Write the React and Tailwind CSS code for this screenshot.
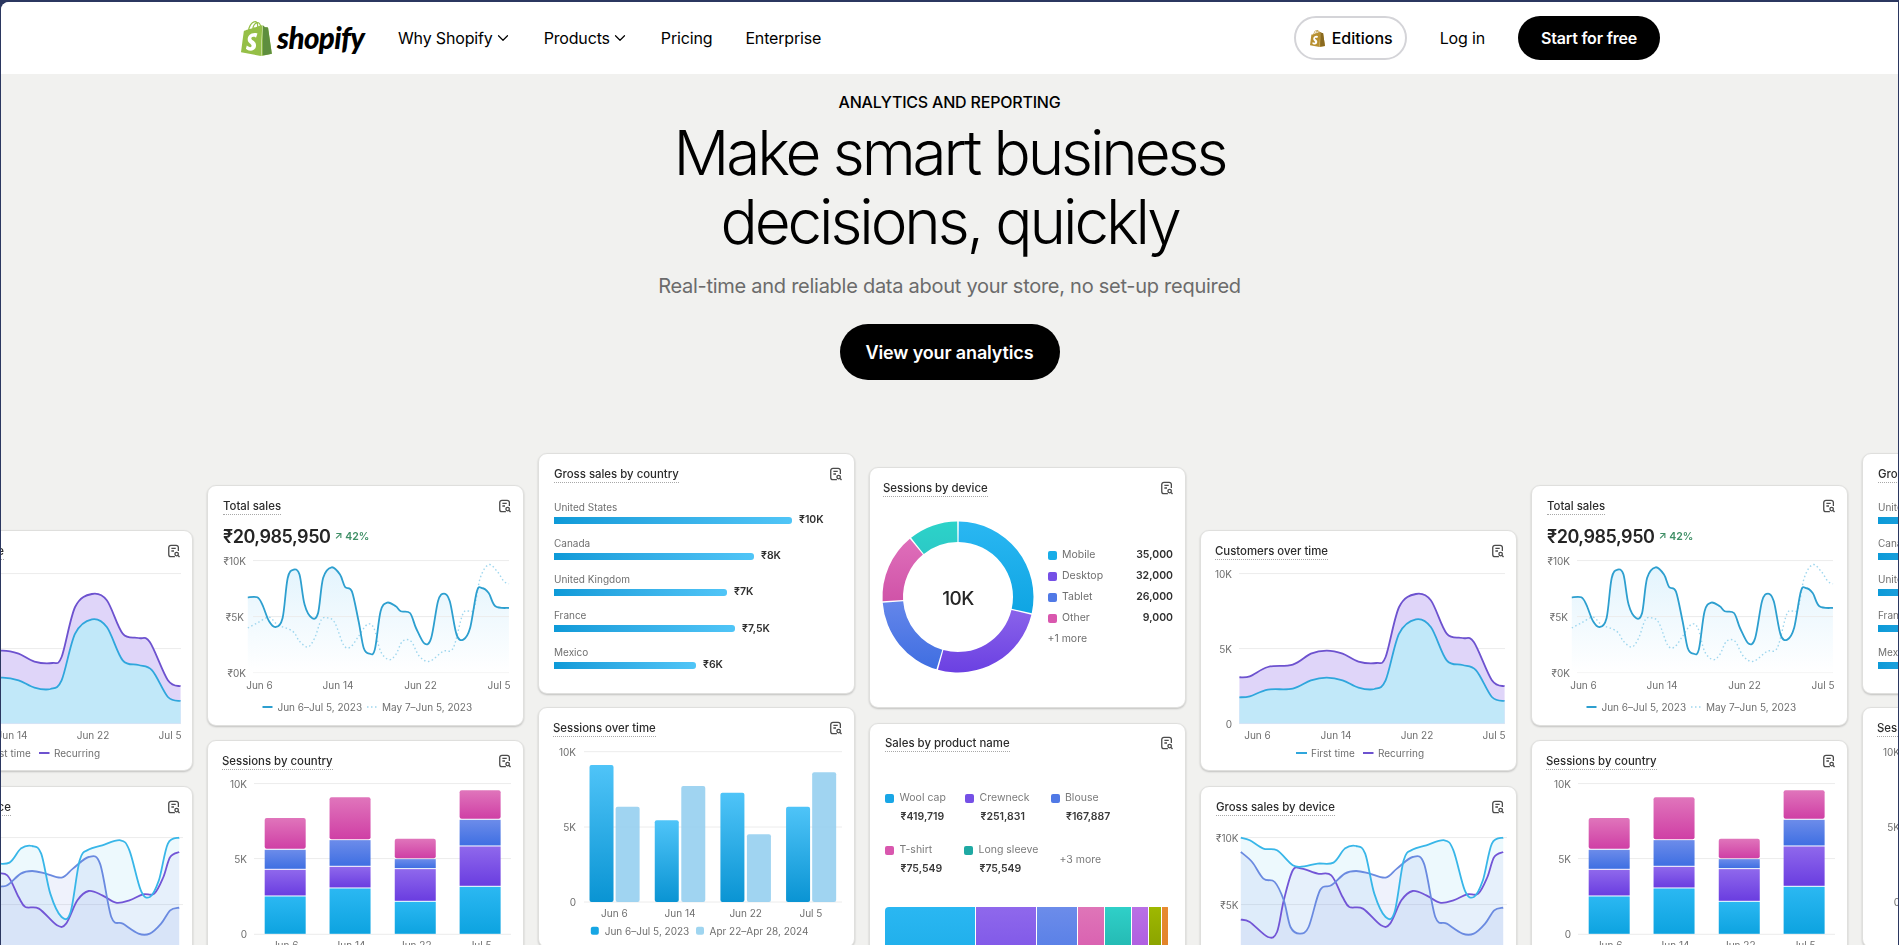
import { ChevronDown } from 'lucide-react';
import { SiShopify } from 'react-icons/si';

// Catmull-Rom through the points, gives a smooth curve like the chart lib does
function smooth(pts) {
  let d = `M${pts[0][0].toFixed(1)} ${pts[0][1].toFixed(1)}`;
  for (let i = 0; i < pts.length - 1; i++) {
    const p0 = pts[i - 1] || pts[i];
    const p1 = pts[i];
    const p2 = pts[i + 1];
    const p3 = pts[i + 2] || p2;
    const c1x = p1[0] + (p2[0] - p0[0]) / 6;
    const c1y = p1[1] + (p2[1] - p0[1]) / 6;
    const c2x = p2[0] - (p3[0] - p1[0]) / 6;
    const c2y = p2[1] - (p3[1] - p1[1]) / 6;
    d += ` C${c1x.toFixed(1)} ${c1y.toFixed(1)} ${c2x.toFixed(1)} ${c2y.toFixed(1)} ${p2[0].toFixed(1)} ${p2[1].toFixed(1)}`;
  }
  return d;
}

function area(pts, bottom) {
  const last = pts[pts.length - 1];
  return `${smooth(pts)} L${last[0].toFixed(1)} ${bottom} L${pts[0][0].toFixed(1)} ${bottom} Z`;
}

function arc(cx, cy, ro, ri, a0, a1) {
  const p = (r, a) => {
    const t = ((a - 90) * Math.PI) / 180;
    return `${(cx + r * Math.cos(t)).toFixed(2)} ${(cy + r * Math.sin(t)).toFixed(2)}`;
  };
  const large = a1 - a0 > 180 ? 1 : 0;
  return `M${p(ro, a0)} A${ro} ${ro} 0 ${large} 1 ${p(ro, a1)} L${p(ri, a1)} A${ri} ${ri} 0 ${large} 0 ${p(ri, a0)} Z`;
}

function Label({ x, y, a = 'end', children }) {
  return (
    <text x={x} y={y} textAnchor={a} dominantBaseline="central" fontSize="10" fill="#6f6f6f">
      {children}
    </text>
  );
}

function Grid({ x1, x2, ys }) {
  return ys.map(y => <line key={y} x1={x1} x2={x2} y1={y} y2={y} stroke="#ececec" strokeWidth="1" />);
}

function ReportIcon() {
  return (
    <svg viewBox="0 0 16 16" className="h-[14px] w-[14px] shrink-0" fill="none" stroke="#4b4b4b" strokeWidth="1.5">
      <path d="M9 14.5H4.5A2.5 2.5 0 0 1 2 12V4a2.5 2.5 0 0 1 2.5-2.5h6A2.5 2.5 0 0 1 13 4v4" />
      <path d="M5 5h5M5 8h3" />
      <circle cx="11" cy="11.5" r="2" />
      <path d="M12.6 13.1l1.7 1.7" />
    </svg>
  );
}

function Card({ title, pad = 'pl-[14px]', children }) {
  return (
    <div className="h-[241px] w-[317px] shrink-0 overflow-hidden rounded-[9px] border border-[#dfdfdd] bg-white shadow-[0_1px_2px_rgba(0,0,0,0.2)]">
      <div className={`flex h-[35.5px] items-start justify-between pr-[11px] pt-[12.5px] ${pad}`}>
        <span className="border-b border-dotted border-[#a8a8a8] pb-[1px] text-[11.4px] font-medium leading-[14px] text-[#2c2c2c]">
          {title}
        </span>
        <ReportIcon />
      </div>
      {children}
    </div>
  );
}

const z7 = pts => pts.map(([x, y]) => [x / 2.21 - 10, y / 3 - 30.7]);

const firstTime = z7([[107,591],[130,588],[170,568],[225,565],[265,540],[300,532],[335,540],[370,562],[405,566],[430,540],[460,400],[497,357],[530,380],[565,480],[600,494],[630,510],[665,590],[693,602]]);
const recurring = z7([[107,531],[130,528],[170,500],[225,493],[265,460],[300,451],[335,460],[370,484],[410,488],[430,470],[460,320],[497,281],[530,300],[565,400],[600,413],[625,425],[665,540],[693,558]]);

function CustomersCard() {
  return (
    <Card title="Customers over time">
      <svg viewBox="0 36 316 204" className="block h-[204px] w-[316px]">
        <Grid x1={38} x2={304} ys={[42.6, 117.6, 192.6]} />
        <path d={area(recurring, 192.6)} fill="#dfd5f9" />
        <path d={area(firstTime, 192.6)} fill="#c1e8f9" />
        <path d={smooth(recurring)} fill="none" stroke="#6d52cf" strokeWidth="1.8" />
        <path d={smooth(firstTime)} fill="none" stroke="#2fa6dc" strokeWidth="1.8" />
        <Label x={31} y={42.6}>10K</Label>
        <Label x={31} y={117.6}>5K</Label>
        <Label x={31} y={192.6}>0</Label>
        <Label x={56.5} y={204} a="middle">Jun 6</Label>
        <Label x={135} y={204} a="middle">Jun 14</Label>
        <Label x={216} y={204} a="middle">Jun 22</Label>
        <Label x={293} y={204} a="middle">Jul 5</Label>
        <line x1={95} x2={106} y1={222} y2={222} stroke="#2fa6dc" strokeWidth="1.8" />
        <Label x={110} y={222} a="start">First time</Label>
        <line x1={162} x2={172.5} y1={222} y2={222} stroke="#6d52cf" strokeWidth="1.8" />
        <Label x={177} y={222} a="start">Recurring</Label>
      </svg>
    </Card>
  );
}

const z3 = pts => pts.map(([x, y]) => [x / 2.96 - 207.5, y / 3 - 45.7]);

const salesNow = z3([[732,468],[760,468],[775,490],[795,540],[815,557],[835,530],[850,410],[868,385],[885,400],[900,490],[922,530],[940,515],[955,410],[980,378],[1005,400],[1020,437],[1040,450],[1060,540],[1075,620],[1092,637],[1108,625],[1125,510],[1145,484],[1170,495],[1185,510],[1212,515],[1230,560],[1255,607],[1275,590],[1295,480],[1313,457],[1330,480],[1350,580],[1370,595],[1390,560],[1410,450],[1425,440],[1445,455],[1465,495],[1505,500]]);
const salesPrev = z3([[732,560],[760,545],[795,528],[820,550],[865,570],[885,600],[910,617],[930,590],[950,535],[970,530],[990,545],[1015,610],[1035,618],[1060,585],[1085,550],[1105,560],[1125,630],[1150,655],[1170,640],[1190,600],[1215,600],[1240,645],[1270,660],[1310,630],[1340,620],[1370,515],[1400,505],[1420,410],[1445,370],[1470,390],[1490,420],[1505,428]]);

function TotalSalesCard() {
  return (
    <Card title="Total sales" pad="pl-[15px]">
      <div className="flex h-[31px] items-center gap-[4px] pl-[15px]">
        <span className="text-[18px] font-semibold leading-none tracking-[-0.45px] text-[#252525]">₹20,985,950</span>
        <span className="text-[10.5px] font-semibold leading-none text-[#3f8f66]">↗ 42%</span>
      </div>
      <svg viewBox="0 66 316 174" className="block h-[174px] w-[316px]">
        <defs>
          <linearGradient id="salesFill" x1="0" y1="0" x2="0" y2="1">
            <stop offset="0" stopColor="#e3f4fd" />
            <stop offset="1" stopColor="#ffffff" />
          </linearGradient>
        </defs>
        <Grid x1={45} x2={301} ys={[73.6, 129.6, 185.6]} />
        <path d={area(salesNow, 185.6)} fill="url(#salesFill)" />
        <line x1={45} x2={301} y1={129.6} y2={129.6} stroke="#ececec" />
        <path d={smooth(salesPrev)} fill="none" stroke="#9ed6ee" strokeWidth="1.4" strokeDasharray="1.5 2.5" />
        <path d={smooth(salesNow)} fill="none" stroke="#2d9fcf" strokeWidth="1.8" />
        <Label x={38} y={73.6}>₹10K</Label>
        <Label x={36} y={129.6}>₹5K</Label>
        <Label x={38} y={185.6}>₹0K</Label>
        <Label x={51.5} y={197.6} a="middle">Jun 6</Label>
        <Label x={130} y={197.6} a="middle">Jun 14</Label>
        <Label x={212.5} y={197.6} a="middle">Jun 22</Label>
        <Label x={291} y={197.6} a="middle">Jul 5</Label>
        <line x1={54.5} x2={64.5} y1={220} y2={220} stroke="#2d9fcf" strokeWidth="1.8" />
        <Label x={69.5} y={220} a="start">Jun 6–Jul 5, 2023</Label>
        <line x1={159} x2={169} y1={220} y2={220} stroke="#9ed6ee" strokeWidth="1.4" strokeDasharray="1.5 2.5" />
        <Label x={174} y={220} a="start">May 7–Jun 5, 2023</Label>
      </svg>
    </Card>
  );
}

const countries = [
  { name: 'United States', width: 238, value: '₹10K' },
  { name: 'Canada', width: 200, value: '₹8K' },
  { name: 'United Kingdom', width: 173, value: '₹7K' },
  { name: 'France', width: 181, value: '₹7,5K' },
  { name: 'Mexico', width: 142, value: '₹6K' },
];

function GrossCountryCard() {
  return (
    <Card title="Gross sales by country" pad="pl-[15px]">
      <div className="mt-[10px] flex flex-col gap-[12.3px] pl-[15px]">
        {countries.map(c => (
          <div key={c.name}>
            <div className="h-[14px] text-[10px] leading-[14px] text-[#6f6f6f]">{c.name}</div>
            <div className="mt-[3px] flex h-[7px] items-center gap-[7px]">
              <div
                className="h-[7px] rounded-r-[3px] bg-linear-to-r from-[#0c9ad8] to-[#50c5f7]"
                style={{ width: c.width }}
              />
              <span className="text-[10.5px] font-semibold leading-none text-[#303030]">{c.value}</span>
            </div>
          </div>
        ))}
      </div>
    </Card>
  );
}

const devices = [
  { name: 'Mobile', value: '35,000', swatch: 'bg-[#18ade8]' },
  { name: 'Desktop', value: '32,000', swatch: 'bg-[#7550e6]' },
  { name: 'Tablet', value: '26,000', swatch: 'bg-[#5079e6]' },
  { name: 'Other', value: '9,000', swatch: 'bg-[#d957ae]' },
];

const slices = [
  { id: 'devMobile', from: 0.6, to: 102.4, top: '#2ab7f2', bottom: '#0fa5e3' },
  { id: 'devDesktop', from: 103.6, to: 195.4, top: '#8a63ea', bottom: '#6b40e2' },
  { id: 'devTablet', from: 196.6, to: 265.6, top: '#6486ea', bottom: '#3f6ee1' },
  { id: 'devOther', from: 266.8, to: 320.4, top: '#df6fba', bottom: '#d053a8' },
  { id: 'devTeal', from: 321.6, to: 359.4, top: '#2cd3c9', bottom: '#2cc9c6' },
];

function SessionsDeviceCard() {
  return (
    <Card title="Sessions by device" pad="pl-[13px]">
      <div className="mt-[13px] flex items-start pl-[8px] pr-[12px]">
        <svg viewBox="0 0 160 160" className="h-[160px] w-[160px] shrink-0">
          <defs>
            {slices.map(s => (
              <linearGradient key={s.id} id={s.id} x1="0" y1="0" x2="0" y2="1">
                <stop offset="0" stopColor={s.top} />
                <stop offset="1" stopColor={s.bottom} />
              </linearGradient>
            ))}
          </defs>
          {slices.map(s => (
            <path key={s.id} d={arc(80, 80, 75.5, 55, s.from, s.to)} fill={`url(#${s.id})`} />
          ))}
          <text x="80" y="81" textAnchor="middle" dominantBaseline="central" fontSize="19" fontWeight="500" letterSpacing="-0.6" fill="#252525">
            10K
          </text>
        </svg>
        <div className="ml-[9.5px] mt-[28px] flex-1">
          {devices.map(d => (
            <div key={d.name} className="flex h-[21px] items-center text-[10.5px]">
              <span className={`h-[9px] w-[9px] rounded-[2px] ${d.swatch}`} />
              <span className="ml-[5.5px] text-[#6f6f6f]">{d.name}</span>
              <span className="ml-auto font-semibold text-[#303030]">{d.value}</span>
            </div>
          ))}
          <div className="flex h-[21px] items-center text-[10.5px] text-[#6f6f6f]">+1 more</div>
        </div>
      </div>
    </Card>
  );
}

const seriesCol = {
  blue: ['#2bb8f2', '#0da3e0'],
  purple: ['#8f68ec', '#6a3de0'],
  tablet: ['#6c8cea', '#3f6fe2'],
  pink: ['#e075bb', '#cf3fa5'],
};

const z5 = (x, y) => [x / 2.96 - 207.5, y / 3 - 10.7];

const stacks = [
  { x: 782, tops: [263, 357, 417, 497], label: 'Jun 6' },
  { x: 974, tops: [201, 328, 408, 473], label: 'Jun 14' },
  { x: 1167, tops: [325, 385, 415, 513], label: 'Jun 22' },
  { x: 1359, tops: [180, 267, 347, 468], label: 'Jul 5' },
];

function SessionsCountryCard() {
  const order = ['pink', 'tablet', 'purple', 'blue'];
  return (
    <Card title="Sessions by country">
      <svg viewBox="0 36 316 204" className="block h-[204px] w-[316px]">
        <defs>
          {order.map(k => (
            <linearGradient key={k} id={`stack-${k}`} x1="0" y1="0" x2="0" y2="1">
              <stop offset="0" stopColor={seriesCol[k][0]} />
              <stop offset="1" stopColor={seriesCol[k][1]} />
            </linearGradient>
          ))}
        </defs>
        <Grid x1={46} x2={303} ys={[42.6, 117.6, 193.3]} />
        <Label x={39} y={42.6}>10K</Label>
        <Label x={39} y={117.6}>5K</Label>
        <Label x={39} y={193.3}>0</Label>
        {stacks.map(b => {
          const [x] = z5(b.x, 0);
          return (
            <g key={b.x}>
              {b.tops.map((t, i) => {
                const y0 = z5(0, t)[1];
                const y1 = z5(0, b.tops[i + 1] ?? 612)[1];
                return (
                  <rect
                    key={t}
                    x={x}
                    y={y0 + (i ? 0.5 : 0)}
                    width="41"
                    height={y1 - y0 - (i ? 1 : 0.5)}
                    rx={i ? 0 : 2}
                    fill={`url(#stack-${order[i]})`}
                  />
                );
              })}
              <Label x={x + 20.5} y={204} a="middle">{b.label}</Label>
            </g>
          );
        })}
      </svg>
    </Card>
  );
}

const pairs = [
  { x1: 140, t1: 195, x2: 202, t2: 320, label: 'Jun 6', c: 199 },
  { x1: 295, t1: 361, x2: 358, t2: 258, label: 'Jun 14', c: 355 },
  { x1: 451, t1: 278, x2: 514, t2: 403, label: 'Jun 22', c: 511 },
  { x1: 607, t1: 320, x2: 669, t2: 217, label: 'Jul 5', c: 666 },
];

const sx = x => x / 2.376 - 8.4;
const sy = y => y / 3 - 8;

function SessionsTimeCard() {
  return (
    <Card title="Sessions over time">
      <svg viewBox="0 36 316 204" className="block h-[204px] w-[316px]">
        <defs>
          <linearGradient id="sessBar" x1="0" y1="0" x2="0" y2="1">
            <stop offset="0" stopColor="#4fc4f8" />
            <stop offset="1" stopColor="#0a94d3" />
          </linearGradient>
        </defs>
        <Grid x1={45} x2={303} ys={[43.7, 119, 194]} />
        <Label x={37} y={43.7}>10K</Label>
        <Label x={37} y={119}>5K</Label>
        <Label x={37} y={194}>0</Label>
        {pairs.map(p => (
          <g key={p.x1}>
            <rect x={sx(p.x1)} y={sy(p.t1)} width="24" height={sy(606) - sy(p.t1)} rx="2" fill="url(#sessBar)" />
            <rect x={sx(p.x2)} y={sy(p.t2)} width="24" height={sy(606) - sy(p.t2)} rx="2" fill="#8fcdee" fillOpacity="0.85" />
            <Label x={sx(p.c)} y={204.7} a="middle">{p.label}</Label>
          </g>
        ))}
        <rect x={51.8} y={218.7} width="8" height="8" rx="2" fill="#16a6e4" />
        <Label x={65.7} y={222.7} a="start">Jun 6–Jul 5, 2023</Label>
        <rect x={157} y={218.7} width="8" height="8" rx="2" fill="#9fd5f0" />
        <Label x={170.5} y={222.7} a="start">Apr 22–Apr 28, 2024</Label>
      </svg>
    </Card>
  );
}

const productsTop = [
  { name: 'Wool cap', value: '₹419,719', swatch: 'bg-[#18a6e6]', w: 'w-[80px]' },
  { name: 'Crewneck', value: '₹251,831', swatch: 'bg-[#7550e6]', w: 'w-[85.5px]' },
  { name: 'Blouse', value: '₹167,887', swatch: 'bg-[#5079e6]', w: 'w-[90px]' },
];
const productsBottom = [
  { name: 'T-shirt', value: '₹75,549', swatch: 'bg-[#d957ae]', w: 'w-[79px]' },
  { name: 'Long sleeve', value: '₹75,549', swatch: 'bg-[#1fa9a3]', w: 'w-[95.5px]' },
];

const treemap = [
  'w-[90px] from-[#2ab7f2] to-[#0ea5e2]',
  'w-[60px] from-[#8f68ec] to-[#6e42e2]',
  'w-[39.5px] from-[#6c8cea] to-[#3f6fe2]',
  'w-[26.5px] from-[#df75b8] to-[#d041a6]',
  'w-[26px] from-[#2fd0c8] to-[#149a96]',
  'w-[16px] from-[#b970e5] to-[#a040d8]',
  'w-[12px] from-[#9eb800] to-[#6f8500]',
  'w-[6px] from-[#e88a30] to-[#d97b22]',
];

function Product({ p }) {
  return (
    <div className={`shrink-0 ${p.w}`}>
      <div className="flex h-[14px] items-center gap-[5.5px] text-[10.5px] text-[#7a7a7a]">
        <span className={`h-[9px] w-[9px] rounded-[2px] ${p.swatch}`} />
        {p.name}
      </div>
      <div className="mt-[5px] h-[14px] pl-[15.5px] text-[10.5px] font-semibold leading-[14px] text-[#3a3a3a]">{p.value}</div>
    </div>
  );
}

function SalesProductCard() {
  return (
    <Card title="Sales by product name" pad="pl-[15px]">
      <div className="mt-[32px] pl-[15px]">
        <div className="flex">
          {productsTop.map(p => <Product key={p.name} p={p} />)}
        </div>
        <div className="mt-[19px] flex items-center">
          {productsBottom.map(p => <Product key={p.name} p={p} />)}
          <span className="text-[10.5px] text-[#7a7a7a]">+3 more</span>
        </div>
      </div>
      <div className="ml-[15px] mt-[31px] flex h-[60px] w-[286px] gap-[1px] overflow-hidden rounded-t-[4px]">
        {treemap.map(cls => (
          <div key={cls} className={`h-[100px] shrink-0 bg-linear-to-b ${cls}`} />
        ))}
      </div>
    </Card>
  );
}

const z7b = pts => pts.map(([x, y]) => [x / 2.21 - 10, y / 3 - 286.7]);

const devCyan = z7b([[110,1012],[130,1020],[160,1045],[190,1050],[225,1095],[250,1098],[280,1090],[315,1087],[340,1045],[365,1037],[385,1060],[405,1180],[430,1250],[450,1235],[470,1080],[490,1048],[520,1035],[560,1020],[580,1050],[605,1170],[625,1190],[645,1140],[665,1030],[690,1012]]);
const devBlue = z7b([[110,1055],[135,1085],[160,1135],[185,1145],[205,1200],[220,1280],[240,1300],[260,1280],[285,1170],[310,1155],[340,1120],[365,1112],[395,1120],[430,1132],[455,1105],[490,1070],[515,1090],[540,1250],[565,1270],[600,1300],[625,1300],[650,1270],[670,1230],[690,1222]]);
const devPurple = z7b([[110,1258],[130,1265],[170,1310],[190,1295],[205,1200],[225,1110],[245,1105],[280,1120],[310,1125],[335,1190],[350,1220],[380,1225],[420,1275],[440,1270],[465,1200],[490,1172],[520,1185],[550,1207],[580,1200],[610,1182],[635,1180],[655,1130],[670,1070],[690,1055]]);

function GrossDeviceCard() {
  return (
    <Card title="Gross sales by device" pad="pl-[15px]">
      <svg viewBox="0 36 316 204" className="block h-[204px] w-[316px]">
        <Grid x1={40} x2={306} ys={[50.6, 117.6, 184.6]} />
        <path d={area(devCyan, 240)} fill="#3bb8ea" fillOpacity="0.09" />
        <path d={area(devBlue, 240)} fill="#5f7ee0" fillOpacity="0.1" />
        <path d={area(devPurple, 240)} fill="#7050d8" fillOpacity="0.05" />
        <path d={smooth(devPurple)} fill="none" stroke="#7255d6" strokeWidth="1.8" />
        <path d={smooth(devBlue)} fill="none" stroke="#6a8ae0" strokeWidth="1.8" />
        <path d={smooth(devCyan)} fill="none" stroke="#38b6e8" strokeWidth="1.8" />
        <Label x={37.5} y={50.6}>₹10K</Label>
        <Label x={37.5} y={117.6}>₹5K</Label>
      </svg>
    </Card>
  );
}

// the strip repeats every 4 columns, so 7 of them fill the width
const columns = [
  { top: 'mt-[77px]', gap: 'gap-[15px]', cards: [CustomersCard, GrossDeviceCard] },
  { top: 'mt-[32px]', gap: 'gap-[14px]', cards: [TotalSalesCard, SessionsCountryCard] },
  { top: 'mt-0', gap: 'gap-[13px]', cards: [GrossCountryCard, SessionsTimeCard] },
  { top: 'mt-[14px]', gap: 'gap-[14.5px]', cards: [SessionsDeviceCard, SalesProductCard] },
  { top: 'mt-[77px]', gap: 'gap-[15px]', cards: [CustomersCard, GrossDeviceCard] },
  { top: 'mt-[32px]', gap: 'gap-[14px]', cards: [TotalSalesCard, SessionsCountryCard] },
  { top: 'mt-0', gap: 'gap-[13px]', cards: [GrossCountryCard, SessionsTimeCard] },
];

function NavLink({ children, caret }) {
  return (
    <a href="#" className="flex items-center text-[16px] leading-6 tracking-[-0.01em] text-black">
      {children}
      {caret && <ChevronDown size={18} strokeWidth={1.6} className="ml-[1.5px]" />}
    </a>
  );
}

function BagIcon({ size, light, dark }) {
  return (
    <span className="relative block shrink-0" style={{ width: size, height: size }}>
      <SiShopify size={size} color={light} className="absolute left-0 top-0" />
      <SiShopify size={size} color={dark} className="absolute left-0 top-0 [clip-path:inset(0_0_0_68%)]" />
    </span>
  );
}

export default function App() {
  return (
    <div className="h-screen overflow-hidden bg-[#2b3760] px-[1px] pt-[2px] font-[family-name:Inter,sans-serif]">
      <div className="h-full overflow-hidden rounded-tl-[8px] bg-[#f1f1ef]">
        <header className="flex h-[72px] items-center justify-between bg-white pl-[238px] pr-[238px]">
          <div className="flex items-center">
            <div className="flex w-[159px] items-center gap-[3px]">
              <BagIcon size={35} light="#95bf47" dark="#5e8e3e" />
              <span className="font-[family-name:Lato,sans-serif] text-[29.5px] font-black italic leading-none tracking-[-0.6px] text-black">
                shopify
              </span>
            </div>
            <nav className="flex items-center gap-[31.5px]">
              <NavLink caret>Why Shopify</NavLink>
              <NavLink caret>Products</NavLink>
              <NavLink>Pricing</NavLink>
              <span className="ml-[1.5px]"><NavLink>Enterprise</NavLink></span>
            </nav>
          </div>
          <div className="flex items-center">
            <a href="#" className="flex h-[44px] w-[113px] items-center justify-center gap-[6px] rounded-full border-2 border-[#d4d4d8] text-[16px] font-medium text-black">
              <BagIcon size={17} light="#b8902f" dark="#8a6a1f" />
              Editions
            </a>
            <a href="#" className="ml-[32.5px] text-[16px] tracking-[-0.01em] text-black">Log in</a>
            <a href="#" className="ml-[33px] flex h-[44px] w-[142px] items-center justify-center rounded-full bg-black text-[16px] font-semibold tracking-[-0.012em] text-white">
              Start for free
            </a>
          </div>
        </header>

        <section className="flex flex-col items-center pt-[18px]">
          <p className="text-[16px] font-medium uppercase leading-5 tracking-[-0.2px] text-black">Analytics and reporting</p>
          <h1 className="mt-[6px] text-center text-[62px] font-light leading-[69px] tracking-[-0.05em] text-black">
            Make smart business
            <br />
            decisions, quickly
          </h1>
          <p className="mt-[16px] text-[20px] leading-7 tracking-[-0.27px] text-[#6b6b6b]">Real-time and reliable data about your store, no set-up required</p>
          <a href="#" className="mt-[24px] flex h-[56px] w-[220px] items-center justify-center rounded-full bg-black text-[18px] font-semibold tracking-[-0.15px] text-white">
            View your analytics
          </a>
        </section>

        <div className="-ml-[125px] mt-[73px] flex items-start gap-[14px] blur-[0.3px]">
          {columns.map((col, i) => (
            <div key={i} className={`flex shrink-0 flex-col ${col.gap} ${col.top}`}>
              {col.cards.map((C, j) => <C key={j} />)}
            </div>
          ))}
        </div>
      </div>
    </div>
  );
}
